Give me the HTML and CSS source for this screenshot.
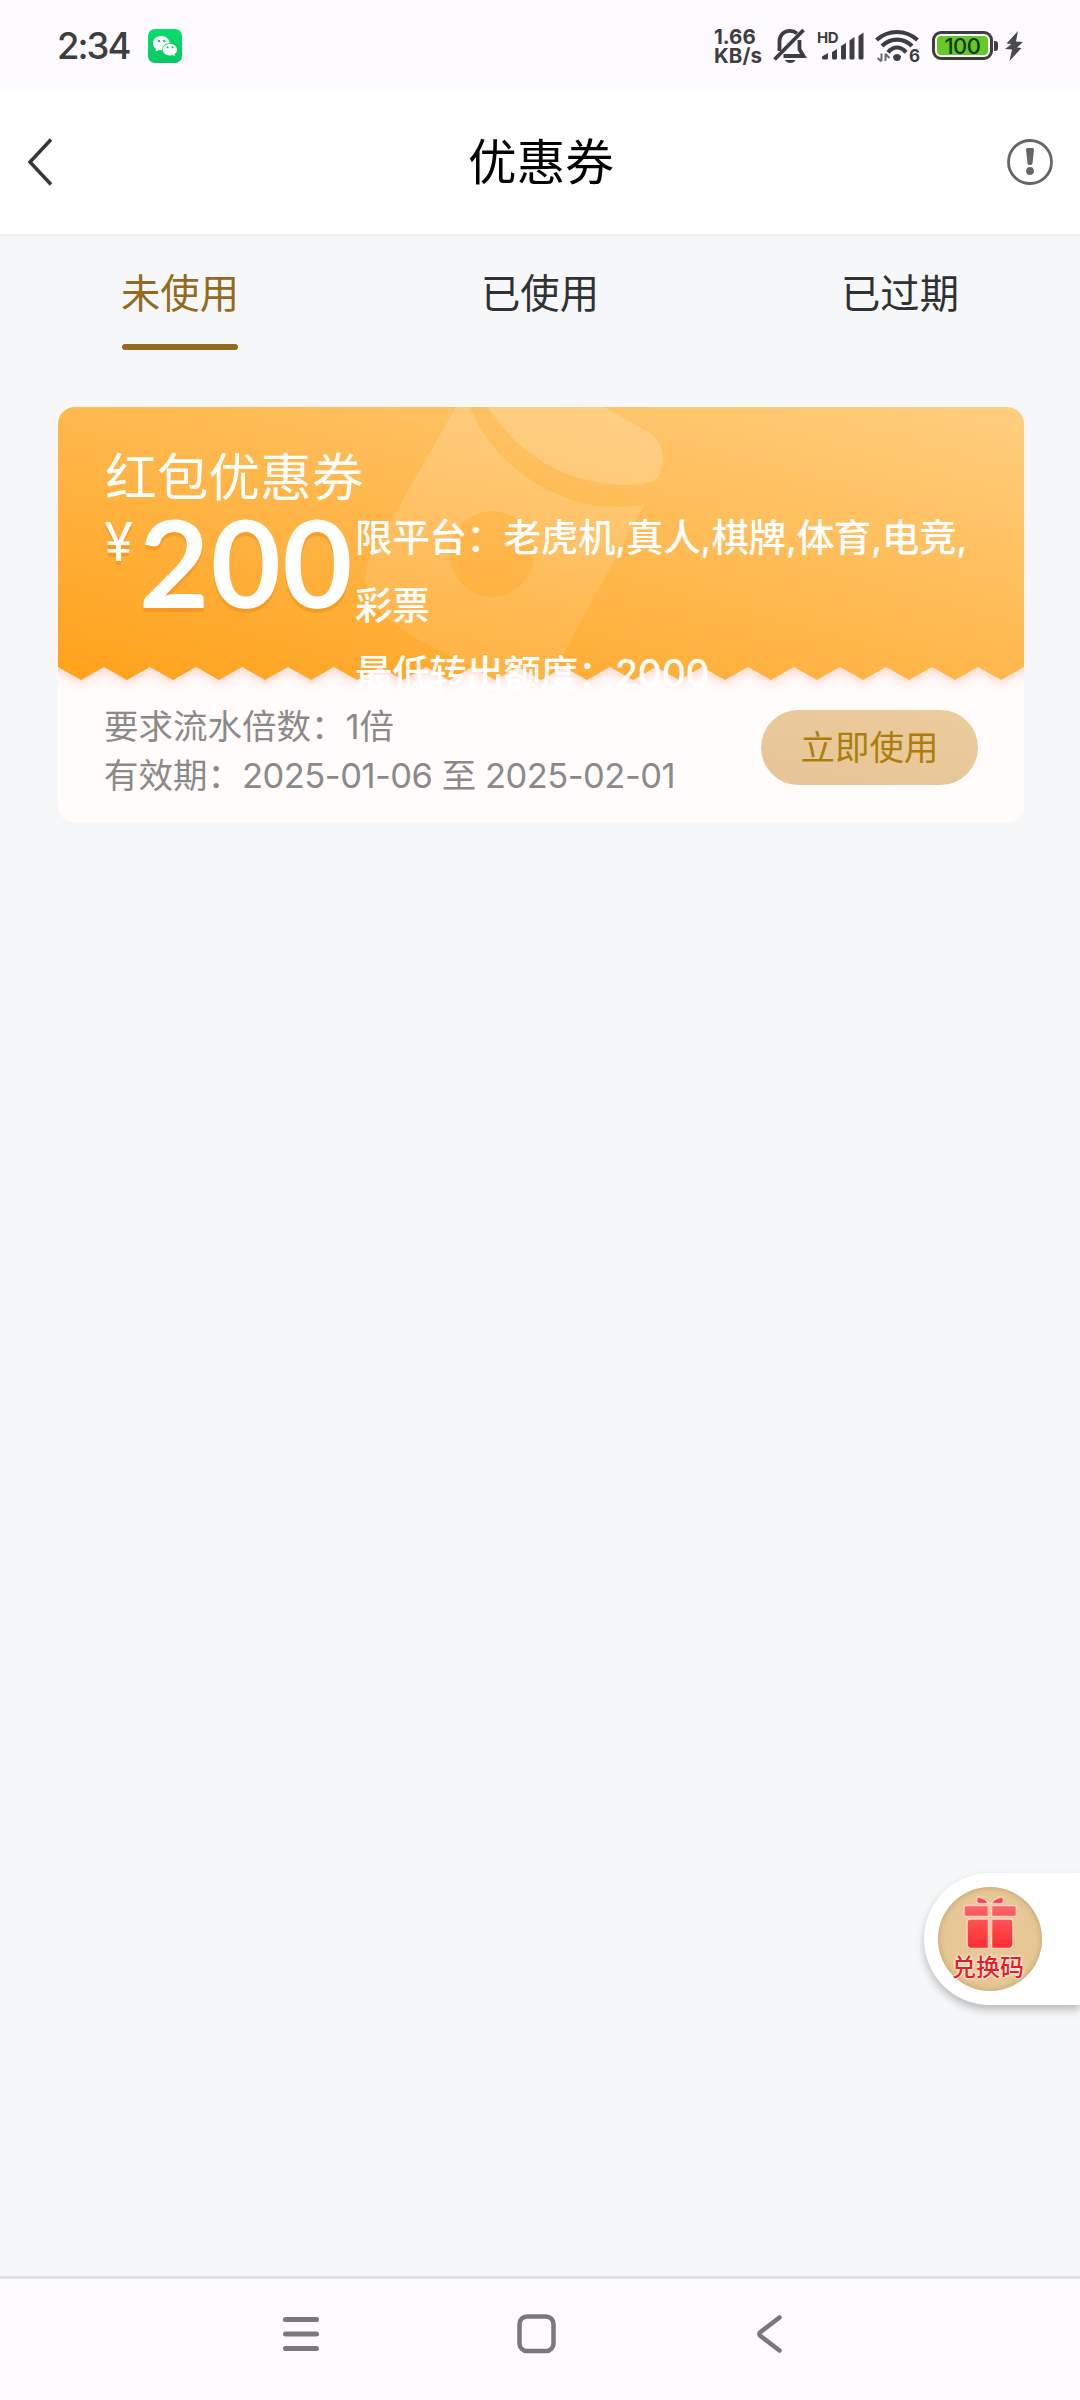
FILE: index.html
```html
<!DOCTYPE html>
<html lang="zh-CN">
<head>
<meta charset="utf-8">
<title>优惠券</title>
<link rel="stylesheet" href="styles.css">
</head>
<body>
<div class="screen">
  <div class="status">
    <span class="time">2:34</span>
    <svg class="wechat" width="34" height="34" viewBox="0 0 34 34">
      <defs><linearGradient id="wx" x1="0" y1="0" x2="0" y2="1"><stop offset="0" stop-color="#05df6c"/><stop offset="1" stop-color="#0bc763"/></linearGradient></defs>
      <rect width="34" height="34" rx="7" fill="url(#wx)"/>
      <path fill="#fff" d="M13.500 7C8.500 7 5 10.200 5 14.200c0 2.300 1.100 4.200 3 5.500L7.600 22.500l3.200-1.600c1 .3 2 .4 3.200.4h.4c-.8-4 3-7.300 7.600-7.100C21.300 9.800 17.600 7 13.500 7Z"/>
      <path fill="#fff" d="M22 15c-4.200 0-7.200 2.600-7.200 5.800s3 5.700 7.200 5.700c.9 0 1.800-.1 2.600-.4l2.300 1.200-.5-2.200c1.700-1.100 2.600-2.600 2.600-4.400C29 17.600 26.100 15 22 15Z"/>
      <g fill="#07cf66"><circle cx="11" cy="12" r="1.200"/><circle cx="16.300" cy="12" r="1.200"/><circle cx="19.600" cy="18.300" r="1"/><circle cx="24.600" cy="18.300" r="1"/></g>
    </svg>
    <span class="spacer"></span>
    <div class="speed"><span class="rate">1.66</span><span class="unit">KB/s</span></div>
    <svg class="bell" width="34" height="36" viewBox="0 0 34 36" fill="none" stroke="#3e3d40" stroke-width="3.800">
      <path d="M6.500 23V13.500C6.500 7 11 2.800 17 2.800c3 0 5.200 1 7 2.600M10.500 28H30.500l-4-6.500V12"/>
      <path d="M1.500 31.500 30.500 2"/>
      <path d="M12 32h10.500c-1.500 4-9 4-10.500 0Z" fill="#3e3d40" stroke="none"/>
    </svg>
    <svg class="signal" width="50" height="32" viewBox="0 0 50 32">
      <text x="0" y="12.500" class="hd">HD</text>
      <g fill="#3e3d40"><path d="M5 26.500 11 23v5q0 1.500-1.500 1.500H6.500Q5 29.500 5 28ZM15 22l5-3v9q0 1.500-1.500 1.500h-2Q15 29.500 15 28ZM24 16l5-3v15q0 1.500-1.500 1.500h-2Q24 29.500 24 28ZM32.500 10.500l5-3.500v21q0 1.500-1.500 1.500h-2q-1.500 0-1.500-1.500ZM41.500 6l5-3.500V28q0 1.500-1.500 1.500h-2q-1.500 0-1.500-1.500Z"/></g>
    </svg>
    <svg class="wifi" width="46" height="36" viewBox="0 0 46 36">
      <g fill="none" stroke="#3e3d40" stroke-width="4.200"><path d="M1.500 12Q10.500 4 22 4t20.500 8"/><path d="M7 18Q13.500 11.700 22 11.700T37 18"/><path d="M13 24.300q4-4.800 9-4.800t9 4.800"/></g>
      <path fill="#3e3d40" d="M18 28q4-4 8 0 0 5-4 5t-4-5Z"/>
      <path d="M6.500 33v-7.500M2.500 30l4 3.500M10.500 25.500V33M10.500 26l4 4" fill="none" stroke="#6b6a6d" stroke-width="2"/>
      <text x="34" y="33.500" class="six">6</text>
    </svg>
    <div class="battery"><span class="level">100</span></div><i class="nub"></i>
    <svg class="bolt" width="18" height="30" viewBox="0 0 18 30"><path fill="#4a494c" d="M13 0 1.500 12.500l5 .5L0 18l7 .5L4.500 30 16.500 17l-4.500-.5L18 11l-7-.5Z"/></svg>
  </div>

  <header class="header">
    <svg class="back" width="26" height="48" viewBox="0 0 26 48"><path d="M24 1.500 3 24l21 22.500" fill="none" stroke="#373737" stroke-width="3.500"/></svg>
    <h1 class="title">优惠券</h1>
    <svg class="info" width="46" height="46" viewBox="0 0 46 46"><circle cx="23" cy="23" r="21.500" fill="none" stroke="#666" stroke-width="2.800"/><path fill="#666" d="M19 10.500Q19 9 20.500 9h5Q27 9 27 10.500L25.500 24.500Q25.300 26 23 26t-2.500-1.500Z"/><circle cx="23" cy="32" r="3.900" fill="#666"/></svg>
  </header>

  <nav class="tabs">
    <div class="tab active"><span class="tab-label">未使用</span></div>
    <div class="tab"><span class="tab-label">已使用</span></div>
    <div class="tab"><span class="tab-label">已过期</span></div>
  </nav>

  <main class="content">
    <article class="coupon">
      <svg class="ticket" width="966" height="416" viewBox="0 0 966 416">
        <defs>
          <linearGradient id="gold" gradientUnits="userSpaceOnUse" x1="416" y1="384" x2="550" y2="-112"><stop offset="0" stop-color="#ffa21b"/><stop offset="1" stop-color="#ffce7f"/></linearGradient>
          <linearGradient id="sheen" x1="0" y1="0" x2="0" y2="1"><stop offset="0" stop-color="#fff" stop-opacity=".17"/><stop offset="1" stop-color="#fff" stop-opacity=".08"/></linearGradient>
          <filter id="glow" x="-5%" y="-5%" width="110%" height="120%"><feDropShadow dx="0" dy="5" stdDeviation="5" flood-color="#ff8a68" flood-opacity=".28"/></filter>
        </defs>
        <rect width="966" height="416" fill="#fffcfb"/>
        <path filter="url(#glow)" fill="url(#gold)" d="M-20 0H986V260H966L943 273 920 260 897 273 874 260 851 273 828 260 805 273 782 260 759 273 736 260 713 273 690 260 667 273 644 260 621 273 598 260 575 273 552 260 529 273 506 260 483 273 460 260 437 273 414 260 391 273 368 260 345 273 322 260 299 273 276 260 253 273 230 260 207 273 184 260 161 273 138 260 115 273 92 260 69 273 46 260 23 273 0 260H-20Z"/>
        <path fill="url(#sheen)" fill-rule="evenodd" d="M398 0h14C438 68 519 112 587 97L498 260l-15 13-23-13-23 13-16-9L361 233 328 211C306 196 304 168 312 150ZM434 104a42 43 0 1 0 .1 0Z"/>
        <path fill="#fff" fill-opacity=".19" d="M430 0C462 52 515 78 570 78q18 0 30-7C610 50 603 32 590 25L546 0Z"/>
      </svg>
      <div class="coupon-top">
        <h2 class="coupon-name">红包优惠券</h2>
        <div class="coupon-info">
          <div class="amount"><span class="yen">¥</span><span class="value">200</span></div>
          <div class="terms"><p>限平台：老虎机,真人,棋牌,体育,电竞,</p><p>彩票</p><p>最低转出额度：2000</p></div>
        </div>
      </div>
      <div class="coupon-bottom">
        <div class="rules"><p>要求流水倍数：1倍</p><p>有效期：<span class="dates">2025-01-06 至 2025-02-01</span></p></div>
        <button class="use">立即使用</button>
      </div>
    </article>
  </main>

  <div class="redeem">
    <div class="redeem-badge">
      <svg class="gift" width="56" height="56" viewBox="0 0 56 56">
        <defs><linearGradient id="red" x1="0" y1="0" x2="0" y2="1"><stop offset="0" stop-color="#fb666a"/><stop offset="1" stop-color="#ff2b30"/></linearGradient></defs>
        <g fill="url(#red)" stroke="#ffd0c0" stroke-width="1.600"><path d="M16 1.500q8 2 11 7H15.500q-2.500-4 .5-7ZM40 1.500q-8 2-11 7h11.500q2.500-4-.5-7Z"/><path d="M4 10.500H26.500v11H4q-2 0-2-2v-7q0-2 2-2ZM29.500 10.500h23q2 0 2 2v7q0 2-2 2H29.500ZM8 24H26.500v29.500H9.500Q5 53.500 5 49V27q0-3 3-3ZM29.500 24H48q3 0 3 3v22q0 4.500-4.500 4.500H29.500Z"/></g>
      </svg>
      <span class="redeem-label">兑换码</span>
    </div>
  </div>

  <footer class="navbar">
    <svg width="40" height="44" viewBox="0 0 40 44"><path d="M4.500 7.500h31M4.500 22h31M4.500 36.500h31" stroke="#7a787a" stroke-width="5" stroke-linecap="round"/></svg>
    <svg width="40" height="44" viewBox="0 0 40 44"><rect x="3.500" y="4.500" width="34" height="34.500" rx="7.500" fill="none" stroke="#7a787a" stroke-width="4.500"/></svg>
    <svg width="40" height="44" viewBox="0 0 40 44"><path d="M29.500 5.500 10.500 20q-2.500 2 0 4L29.500 38.500" fill="none" stroke="#7a787a" stroke-width="4.500" stroke-linecap="round"/></svg>
  </footer>
</div>
</body>
</html>
```
FILE: styles.css
```css
* { box-sizing: border-box; margin: 0; padding: 0; }
body { font-family: Inter, "Noto Sans CJK SC", sans-serif; background: #f5f7f9; font-weight: 400; }
h1, h2 { font-weight: 400; }
svg { display: block; flex: none; }
.screen { position: relative; width: 1080px; height: 2400px; display: flex; flex-direction: column; overflow: hidden; background: #f5f7f9; }

.status { flex: none; height: 89px; padding: 2px 57px 0 57px; display: flex; align-items: center; background: #fdfbff; color: #3e3d40; }
.time { width: 91px; font-size: 36.5px; font-weight: 500; letter-spacing: -2px; white-space: nowrap; }
.spacer { flex: 1; }
.speed { width: 59px; font-size: 20.500px; font-weight: 700; line-height: 19px; display: flex; flex-direction: column; white-space: nowrap; }
.unit { letter-spacing: 0.1px; }
.bell { margin-right: 10px; }
.signal { margin-right: 8px; overflow: visible; }
.hd { font: 700 15px Inter, sans-serif; fill: #3e3d40; letter-spacing: -0.5px; }
.wifi { margin-right: 11px; overflow: visible; }
.six { font: 700 17px Inter, sans-serif; fill: #3e3d40; }
.battery { width: 61px; height: 29px; padding: 2px; border: 3px solid #3e3d40; border-radius: 9px; }
.level { display: block; height: 19px; border-radius: 4px; background: #65c728; color: #15370c; font-size: 22px; font-weight: 500; line-height: 20px; text-align: center; letter-spacing: -0.5px; }
.nub { width: 4px; height: 10px; margin: 0 7px 0 1px; border-radius: 0 3px 3px 0; background: #3e3d40; }

.header { flex: none; height: 147px; padding: 0 27px; display: flex; align-items: center; justify-content: space-between; background: #fff; border-bottom: 2px solid #eeeff1; }
.back { margin-right: 20px; }
.title { padding-top: 3px; margin-right: -2px; font-size: 48.600px; line-height: 60px; color: #000; }

.tabs { flex: none; height: 171px; display: grid; grid-template-columns: repeat(3, 1fr); justify-items: center; align-items: start; }
.tab { position: relative; height: 114px; padding-top: 30px; color: #303133; }
.tab-label { display: block; font-size: 39.300px; line-height: 56px; }
.tab.active { color: #936a1e; }
.tab.active::after { content: ""; position: absolute; left: 1px; right: 1px; bottom: 0; height: 6px; border-radius: 3px; background: #936a1e; }

.content { flex: 1; padding: 0 56px 0 58px; }
.coupon { position: relative; height: 416px; border-radius: 17px; overflow: hidden; }
.ticket { position: absolute; inset: 0; }
.coupon-top { position: relative; height: 285px; padding: 40px 46px 0; color: #fff; }
.coupon-name { height: 57px; padding-left: 1px; font-size: 51.700px; line-height: 60px; }
.coupon-info { display: flex; align-items: flex-start; }
.amount { width: 251px; height: 112px; display: flex; align-items: flex-start; white-space: nowrap; text-shadow: 0 4px 1px rgba(240, 130, 10, .45); }
.yen { width: 35px; padding-top: 5px; font-size: 53px; line-height: 66px; }
.value { font-family: Lato, sans-serif; font-size: 121px; line-height: 115px; font-weight: 700; letter-spacing: 1.5px; }
.terms { font-size: 37.500px; line-height: 68px; font-weight: 500; letter-spacing: -0.350px; white-space: nowrap; }
.coupon-bottom { position: relative; height: 131px; padding: 10px 46px 0; display: flex; justify-content: space-between; align-items: flex-start; }
.rules { font-size: 34.500px; line-height: 49px; color: #8b8a8a; white-space: nowrap; }
.dates { letter-spacing: -0.500px; }
.use { width: 217px; height: 75px; margin-top: 8px; padding-bottom: 5px; border: 0; border-radius: 38px; background: linear-gradient(15deg, #e6c497, #eccc9d); color: #ad7e0b; font: 400 34.500px "Noto Sans CJK SC", sans-serif; }

.redeem { position: absolute; right: 0; top: 1873px; width: 156px; height: 132px; padding: 14px; border-radius: 66px 0 0 66px; background: #fff; box-shadow: 0 5px 8px rgba(0, 0, 0, .24); }
.redeem-badge { width: 104px; height: 104px; border-radius: 50%; background: #e7c796; box-shadow: inset 0 0 7px #bd9e6e; display: flex; flex-direction: column; align-items: center; padding-top: 8px; }
.redeem-label { font-size: 24px; line-height: 30px; margin: 2px 4px 0 0; font-weight: 500; color: #f01820; white-space: nowrap; text-shadow: 0 0 2px #fff, 0 0 2px #fff, 0 0 3px #fff; }

.navbar { flex: none; height: 124px; padding: 33px 290px 0 281px; border-top: 3px solid #e1e0e8; background: #fdfbff; display: flex; align-items: flex-start; justify-content: space-between; }
```
